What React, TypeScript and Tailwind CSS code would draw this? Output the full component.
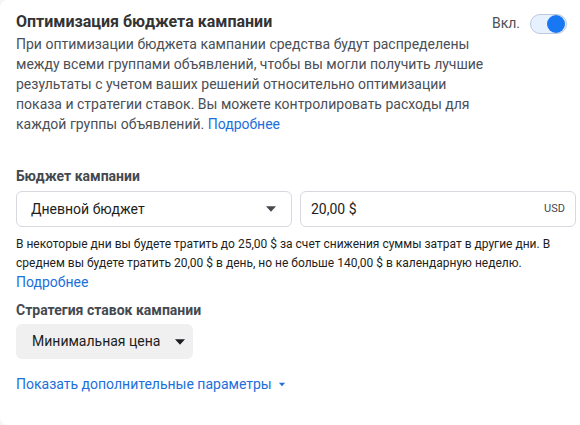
import React from 'react';

const Caret = ({ className = '' }: { className?: string }) => (
  <svg viewBox="0 0 12 8" className={className} fill="currentColor">
    <path d="M1 1.2h10L6 6.8z" />
  </svg>
);

export default function App() {
  return (
    <div className="min-h-screen bg-[#f5f6f7] font-['Roboto',sans-serif]">
      <div className="h-[425px] w-[600px] rounded-lg bg-white px-4 pt-[11px]">
        {/* Header */}
        <div className="flex items-start justify-between pr-[17px]">
          <div className="text-[16px] font-bold leading-[22px] text-[#333]">Оптимизация бюджета кампании</div>
          <div className="flex items-center gap-[10px] pt-[2px]">
            <span className="text-[14px] text-[#4b4f56]">Вкл.</span>
            <div className="flex h-[20px] w-[37px] items-center justify-end rounded-full border border-[#bcc9e0] bg-[#e7f0fd] pr-px">
              <div className="h-[18px] w-[18px] rounded-full bg-[#1877f2]" />
            </div>
          </div>
        </div>
        <p className="w-[478px] text-[14px] leading-[20px] text-[#4b4f56]">
          При оптимизации бюджета кампании средства будут распределены между всеми группами объявлений, чтобы вы могли получить лучшие результаты с учетом ваших решений относительно оптимизации показа и стратегии ставок. Вы можете контролировать расходы для каждой группы объявлений. <span className="text-[#216fdb]">Подробнее</span>
        </p>

        {/* Budget */}
        <div className="mt-[32px] text-[14px] font-bold leading-[20px] text-[#444950]">Бюджет кампании</div>
        <div className="mt-[5px] flex gap-[8px]">
          <div className="flex h-[36px] w-[276px] items-center justify-between rounded-md border border-[#d6d9dd] px-[14px]">
            <span className="text-[14px] text-[#1c1e21]">Дневной бюджет</span>
            <Caret className="h-[8px] w-[12px] text-[#444950]" />
          </div>
          <div className="flex h-[36px] w-[276px] items-center justify-between rounded-md border border-[#d6d9dd] px-[10px]">
            <span className="text-[14px] text-[#1c1e21]">20,00 $</span>
            <span className="text-[11px] text-[#444950]">USD</span>
          </div>
        </div>
        <p className="mt-[8px] w-[559px] text-[12px] leading-[19px] text-[#1c1e21]">
          В некоторые дни вы будете тратить до 25,00 $ за счет снижения суммы затрат в другие дни. В среднем вы будете тратить 20,00 $ в день, но не больше 140,00 $ в календарную неделю.
        </p>
        <div className="text-[14px] leading-[18px] text-[#216fdb]">Подробнее</div>

        {/* Bid strategy */}
        <div className="mt-[9px] text-[14px] font-bold leading-[20px] text-[#444950]">Стратегия ставок кампании</div>
        <div className="mt-[4px] flex h-[35px] w-[177px] items-center gap-[14px] rounded-md bg-[#f0f0f0] pl-[16px]">
          <span className="whitespace-nowrap text-[14px] text-[#1c1e21]">Минимальная цена</span>
          <Caret className="h-[8px] w-[12px] text-[#1c1e21]" />
        </div>

        <div className="mt-[15px] flex items-center gap-[6px] text-[14px] text-[#216fdb]">
          <span>Показать дополнительные параметры</span>
          <Caret className="h-[5px] w-[8px]" />
        </div>
      </div>
    </div>
  );
}
